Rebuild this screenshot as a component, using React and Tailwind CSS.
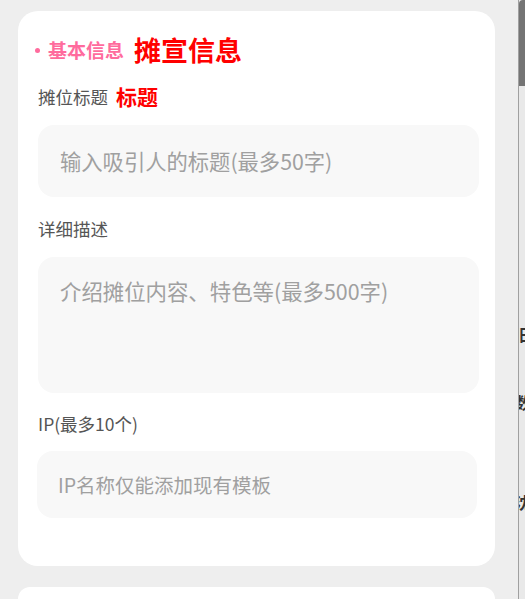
import React from 'react';

const font = { fontFamily: '"Noto Sans CJK SC", "Noto Sans", sans-serif' };

const Field = ({ label, children, className }) => (
    <div className={className}>
        <div className="h-[26px] flex items-center text-[17.5px] text-[#555]">{label}</div>
        {children}
    </div>
);

export default function App() {
    return (
        <div className="w-[525px] h-[599px] overflow-hidden flex bg-[#eeeeee]" style={font}>
            <div className="w-[518px] pl-[18px] pr-[23px] pt-[11px] flex flex-col gap-[21px]">
                <div className="bg-white rounded-[20px] pl-[20px] pr-[16px] pt-[21px] pb-[48px]">
                    <div className="h-[36px] flex items-center">
                        <span className="w-[5px] h-[5px] rounded-full bg-[#ff6b9d] -ml-[3px] mr-[8px]" />
                        <span className="text-[#ff6b9d] text-[19px] font-bold">基本信息</span>
                        <span className="text-[#ff0000] text-[27px] font-bold ml-[10px]">摊宣信息</span>
                    </div>

                    <div className="mt-[16px] h-[26px] flex items-center">
                        <span className="text-[17.5px] text-[#555]">摊位标题</span>
                        <span className="text-[21px] text-[#ff0000] font-bold ml-[8px]">标题</span>
                    </div>
                    <div className="mt-[15px] h-[72px] bg-[#f8f8f8] rounded-[16px] flex items-center pl-[22px] text-[21.3px] text-[#a0a0a0]">
                        输入吸引人的标题(最多50字)
                    </div>

                    <Field label="详细描述" className="mt-[19px]">
                        <div className="mt-[15px] h-[136px] bg-[#f8f8f8] rounded-[16px] pl-[22px] pt-[19px] text-[21.4px] text-[#a0a0a0] leading-[30px]">
                            介绍摊位内容、特色等(最多500字)
                        </div>
                    </Field>

                    <Field label="IP(最多10个)" className="mt-[18px]">
                        <div className="mt-[14px] h-[67px] bg-[#f8f8f8] rounded-[16px] flex items-center pl-[21px] -ml-[1px] mr-[2px] text-[19.5px] text-[#a0a0a0]">
                            IP名称仅能添加现有模板
                        </div>
                    </Field>
                </div>
                <div className="bg-white rounded-t-[20px] h-[40px]" />
            </div>

            <div className="relative w-[7px] h-full border-l border-[#a0a0a0] bg-[#e9e9e9] overflow-hidden">
                <div className="absolute top-0 left-0 w-[7px] h-[86px] bg-[#747474] rounded-tl-[4px]" />
                <div className="flex flex-col text-[16px] font-bold text-[#333] whitespace-nowrap leading-none">
                    <span className="mt-[326px] -ml-[1px]">日</span>
                    <span className="mt-[52px] -ml-[4px]">数</span>
                    <span className="mt-[84px] -ml-[4px]">沈</span>
                </div>
            </div>
        </div>
    );
}
